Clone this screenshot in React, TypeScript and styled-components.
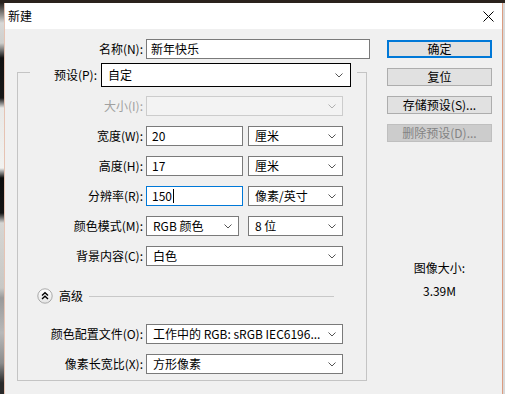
import React from "react";
import styled, { createGlobalStyle } from "styled-components";

const Global = createGlobalStyle`
  html, body { margin: 0; padding: 0; }
  body { font-family: "Noto Sans CJK SC", "Noto Sans", sans-serif; font-size: 12px; }
  * { box-sizing: border-box; }
`;

const Page = styled.div`
  width: 505px;
  height: 394px;
  display: flex;
  flex-direction: column;
  background: #d4d4d4;
  overflow: hidden;
`;

const TopStrip = styled.div`
  height: 3px;
  background: #2a221d;
  flex: none;
`;

const Main = styled.div`
  display: flex;
  flex: 1;
  min-height: 0;
`;

const PhotoStrip = styled.div`
  width: 4px;
  flex: none;
  background: linear-gradient(
    to bottom,
    #2a2522 0px, #d8d8d6 20px, #cfcfcc 40px, #111 55px, #181818 95px,
    #e9e9e7 105px, #f2f2f0 165px, #0d0d0d 175px, #141414 210px,
    #d6d6d3 220px, #c8c8c5 285px, #9a9a9a 295px, #b8b8b8 330px,
    #8c8c8c 360px, #2a2a2a 380px
  );
`;

const Dialog = styled.div`
  width: 499px;
  flex: none;
  display: flex;
  flex-direction: column;
  border-left: 1px solid #e6c3b3;
  border-right: 1px solid #dc9c80;
  background: #f0f0f0;
`;

const RightEdge = styled.div`
  flex: 1;
  background: #d8d8d8;
`;

const TitleBar = styled.div`
  height: 26px;
  flex: none;
  background: #ffffff;
  display: flex;
  align-items: center;
  justify-content: space-between;
  padding: 0 8px 0 3px;
  font-size: 12px;
  line-height: 16px;
  color: #000;
`;

const CloseIcon = styled.svg`
  width: 11px;
  height: 11px;
  display: block;
`;

const Body = styled.div`
  flex: 1;
  display: flex;
  padding-top: 10px;
  background: #f0f0f0;
`;

const LeftCol = styled.div`
  width: 365px;
  flex: none;
  padding-left: 12px;
  display: flex;
  flex-direction: column;
`;

const Row = styled.div`
  display: flex;
  align-items: center;
  height: 20px;
  gap: 3px;
`;

const Label = styled.div<{ $w?: number; $disabled?: boolean }>`
  width: ${(p) => p.$w ?? 125}px;
  flex: none;
  text-align: right;
  white-space: nowrap;
  line-height: 16px;
  color: ${(p) => (p.$disabled ? "#a0a0a0" : "#000")};
`;

const TextBox = styled.div<{ $w?: number; $focus?: boolean; $pad?: number }>`
  ${(p) => (p.$w ? `width: ${p.$w}px;` : "flex: 1;")}
  height: 20px;
  background: #fff;
  border: 1px solid ${(p) => (p.$focus ? "#0078d7" : "#7a7a7a")};
  padding-left: ${(p) => p.$pad ?? 5}px;
  display: flex;
  align-items: center;
  line-height: 16px;
  color: #000;
  white-space: nowrap;
`;

const Caret = styled.span`
  display: inline-block;
  width: 1px;
  height: 14px;
  background: #000;
  margin-left: 1px;
`;

const Select = styled.div<{ $w: number; $h?: number; $dark?: boolean; $disabled?: boolean; $chev?: number }>`
  width: ${(p) => p.$w}px;
  height: ${(p) => p.$h ?? 20}px;
  flex: none;
  background: ${(p) => (p.$disabled ? "#f3f3f3" : "#fff")};
  border: 1px solid ${(p) => (p.$dark ? "#000" : p.$disabled ? "#cccccc" : "#7a7a7a")};
  padding: 0 ${(p) => p.$chev ?? 6}px 0 6px;
  display: flex;
  align-items: center;
  justify-content: space-between;
  line-height: 16px;
  color: #000;
  white-space: nowrap;
  overflow: hidden;
`;

const ChevronSvg = styled.svg`
  width: 8px;
  height: 5px;
  flex: none;
  display: block;
`;

const Chevron = ({ color = "#555" }: { color?: string }) => (
  <ChevronSvg viewBox="0 0 8 5">
    <path d="M0.5 0.5 L4 4 L7.5 0.5" fill="none" stroke={color} strokeWidth="1" />
  </ChevronSvg>
);

const Frame = styled.div`
  width: 350px;
  margin-top: 13px;
  border: 1px solid #c4c4c4;
  padding-bottom: 6px;
  display: flex;
  flex-direction: column;
`;

const PresetRow = styled.div`
  margin-top: -10px;
  margin-left: 12px;
  width: 327px;
  height: 24px;
  background: #f0f0f0;
  display: flex;
  align-items: center;
  gap: 4px;
  padding: 0 6px 0 22px;
`;

const PresetLabel = styled.div`
  flex: 1;
  text-align: right;
  white-space: nowrap;
  line-height: 16px;
`;

const Rows = styled.div<{ $mt: number }>`
  display: flex;
  flex-direction: column;
  gap: 10px;
  margin-top: ${(p) => p.$mt}px;
`;

const Pair = styled.div<{ $gap: number }>`
  display: flex;
  align-items: center;
  gap: ${(p) => p.$gap}px;
`;

const Advanced = styled.div`
  margin-top: 22px;
  height: 16px;
  display: flex;
  align-items: center;
  padding-left: 19px;
  padding-right: 32px;
  gap: 6px;
`;

const AdvIcon = styled.svg`
  width: 16px;
  height: 16px;
  display: block;
  flex: none;
`;

const AdvText = styled.div`
  line-height: 16px;
  white-space: nowrap;
`;

const AdvLine = styled.div`
  flex: 1;
  height: 0;
  border-top: 1px solid #c8c8c8;
  margin-top: 1px;
`;

const RightCol = styled.div`
  width: 105px;
  margin-left: 17px;
  padding-top: 1px;
  display: flex;
  flex-direction: column;
  gap: 10px;
`;

const Button = styled.div<{ $primary?: boolean; $disabled?: boolean }>`
  height: 18px;
  display: flex;
  align-items: center;
  justify-content: center;
  background: ${(p) => (p.$disabled ? "#cccccc" : "#e1e1e1")};
  border: ${(p) => (p.$primary ? "2px solid #0078d7" : p.$disabled ? "1px solid #bfbfbf" : "1px solid #adadad")};
  color: ${(p) => (p.$disabled ? "#838383" : "#000")};
  line-height: 14px;
  white-space: nowrap;
`;

const SizeInfo = styled.div`
  margin-top: 108px;
  display: flex;
  flex-direction: column;
  align-items: center;
  gap: 7px;
  line-height: 16px;
  color: #000;
`;

export default function App() {
  return (
    <Page>
      <Global />
      <TopStrip />
      <Main>
        <PhotoStrip />
        <Dialog>
          <TitleBar>
            <span>新建</span>
            <CloseIcon viewBox="0 0 11 11">
              <path d="M0.5 0.5 L10.5 10.5 M10.5 0.5 L0.5 10.5" stroke="#000" strokeWidth="1" />
            </CloseIcon>
          </TitleBar>
          <Body>
            <LeftCol>
              <Row>
                <Label $w={126}>名称(N):</Label>
                <TextBox $pad={4}>新年快乐</TextBox>
              </Row>
              <Frame>
                <PresetRow>
                  <PresetLabel>预设(P):</PresetLabel>
                  <Select $w={250} $h={24} $dark $chev={7}>
                    <span>自定</span>
                    <Chevron />
                  </Select>
                </PresetRow>
                <Rows $mt={9}>
                  <Row>
                    <Label $disabled>大小(I):</Label>
                    <Select $w={197} $disabled $chev={6}>
                      <span />
                      <Chevron color="#b0b0b0" />
                    </Select>
                  </Row>
                  <Row>
                    <Label>宽度(W):</Label>
                    <Pair $gap={5}>
                      <TextBox $w={97}>20</TextBox>
                      <Select $w={95}>
                        <span>厘米</span>
                        <Chevron />
                      </Select>
                    </Pair>
                  </Row>
                  <Row>
                    <Label>高度(H):</Label>
                    <Pair $gap={5}>
                      <TextBox $w={97}>17</TextBox>
                      <Select $w={95}>
                        <span>厘米</span>
                        <Chevron />
                      </Select>
                    </Pair>
                  </Row>
                  <Row>
                    <Label>分辨率(R):</Label>
                    <Pair $gap={5}>
                      <TextBox $w={97} $focus>
                        150<Caret />
                      </TextBox>
                      <Select $w={95}>
                        <span>像素/英寸</span>
                        <Chevron />
                      </Select>
                    </Pair>
                  </Row>
                  <Row>
                    <Label>颜色模式(M):</Label>
                    <Pair $gap={9}>
                      <Select $w={93}>
                        <span>RGB 颜色</span>
                        <Chevron />
                      </Select>
                      <Select $w={95}>
                        <span>8 位</span>
                        <Chevron />
                      </Select>
                    </Pair>
                  </Row>
                  <Row>
                    <Label>背景内容(C):</Label>
                    <Select $w={197}>
                      <span>白色</span>
                      <Chevron />
                    </Select>
                  </Row>
                </Rows>
                <Advanced>
                  <AdvIcon viewBox="0 0 16 16">
                    <defs>
                      <linearGradient id="advg" x1="0" y1="0" x2="0" y2="1">
                        <stop offset="0" stopColor="#ffffff" />
                        <stop offset="1" stopColor="#e4e4e4" />
                      </linearGradient>
                    </defs>
                    <circle cx="8" cy="8" r="7.2" fill="url(#advg)" stroke="#a9a9a9" strokeWidth="1" />
                    <path d="M5 7.5 L8 4.8 L11 7.5 M5 11 L8 8.3 L11 11" fill="none" stroke="#000" strokeWidth="1.4" />
                  </AdvIcon>
                  <AdvText>高级</AdvText>
                  <AdvLine />
                </Advanced>
                <Rows $mt={20}>
                  <Row>
                    <Label>颜色配置文件(O):</Label>
                    <Select $w={197}>
                      <span>工作中的 RGB: sRGB IEC6196...</span>
                      <Chevron />
                    </Select>
                  </Row>
                  <Row>
                    <Label>像素长宽比(X):</Label>
                    <Select $w={197}>
                      <span>方形像素</span>
                      <Chevron />
                    </Select>
                  </Row>
                </Rows>
              </Frame>
            </LeftCol>
            <RightCol>
              <Button $primary>确定</Button>
              <Button>复位</Button>
              <Button>存储预设(S)...</Button>
              <Button $disabled>删除预设(D)...</Button>
              <SizeInfo>
                <div>图像大小:</div>
                <div>3.39M</div>
              </SizeInfo>
            </RightCol>
          </Body>
        </Dialog>
        <RightEdge />
      </Main>
    </Page>
  );
}
